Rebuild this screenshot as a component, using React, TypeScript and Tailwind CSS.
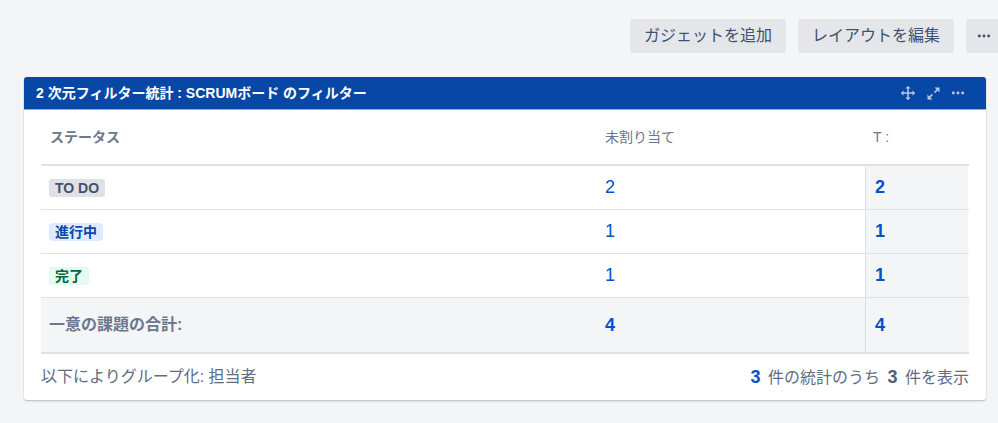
import React from "react";

const font = { fontFamily: '"Liberation Sans", "Noto Sans CJK JP", sans-serif' };

function MoveIcon() {
  return (
    <svg width="18" height="18" viewBox="0 0 24 24" fill="currentColor">
      <path d="M12 2.5l3.5 3.5h-2.5v5h5V8.5l3.5 3.5-3.5 3.5V13h-5v5h2.5L12 21.5 8.5 18H11v-5H6v2.5L2.5 12 6 8.5V11h5V6H8.5z" />
    </svg>
  );
}

function ExpandIcon() {
  return (
    <svg width="17" height="17" viewBox="0 0 24 24" fill="currentColor">
      <path d="M13.5 3.5h7v7l-2.6-2.6-3.6 3.6-1.6-1.6 3.6-3.6z" />
      <path d="M10.5 20.5h-7v-7l2.6 2.6 3.6-3.6 1.6 1.6-3.6 3.6z" />
    </svg>
  );
}

function Dots({ className }: { className?: string }) {
  return (
    <svg width="16" height="16" viewBox="0 0 24 24" fill="currentColor" className={className}>
      <circle cx="5" cy="12" r="2.2" />
      <circle cx="12" cy="12" r="2.2" />
      <circle cx="19" cy="12" r="2.2" />
    </svg>
  );
}

type Row = { label: string; lozenge: string; a: string; t: string };

const rows: Row[] = [
  { label: "TO DO", lozenge: "bg-[#dfe1e6] text-[#42526e]", a: "2", t: "2" },
  { label: "進行中", lozenge: "bg-[#deebff] text-[#0747a6]", a: "1", t: "1" },
  { label: "完了", lozenge: "bg-[#e3fcef] text-[#006644]", a: "1", t: "1" },
];

export default function App() {
  return (
    <div className="w-full h-[423px] bg-[#f4f5f7] overflow-hidden" style={font}>
      <div className="flex justify-end gap-3 pt-[19px] pr-0 mr-[-10px]">
        <button className="h-[34px] px-[14px] rounded-[3px] bg-[#e4e6ea] text-[#42526e] text-[16px] leading-none">
          ガジェットを追加
        </button>
        <button className="h-[34px] px-[14px] rounded-[3px] bg-[#e4e6ea] text-[#42526e] text-[16px] leading-none">
          レイアウトを編集
        </button>
        <button className="h-[34px] w-[42px] rounded-[3px] bg-[#e4e6ea] text-[#42526e] flex items-center pl-[10px]">
          <Dots />
        </button>
      </div>

      <div className="ml-[24px] mt-[24px] w-[962px] bg-white rounded-[3px] shadow-[0_1px_2px_rgba(9,30,66,0.28)]">
        <div className="h-[33px] bg-[#0747a6] rounded-t-[3px] border-b border-[#8fb1e3] flex items-center pl-[12px] pr-[20px]">
          <div className="text-white font-bold text-[14px] leading-none flex-1">
            2 次元フィルター統計 : SCRUMボード のフィルター
          </div>
          <div className="flex items-center gap-[8px] text-[#b8c9e6]">
            <MoveIcon />
            <ExpandIcon />
            <Dots />
          </div>
        </div>

        <div className="px-[17px]">
          <div className="grid grid-cols-[556px_268px_103px] h-[56px] items-center border-b-2 border-[#dfe1e6] text-[14px] text-[#6b778c]">
            <div className="pl-[9px] font-bold">ステータス</div>
            <div className="pl-[8px]">未割り当て</div>
            <div className="pl-[8px]">T :</div>
          </div>

          {rows.map((r) => (
            <div
              key={r.label}
              className="grid grid-cols-[556px_268px_103px] h-[44px] border-b border-[#dfe1e6]"
            >
              <div className="pl-[8px] flex items-center">
                <span
                  className={`${r.lozenge} font-bold text-[14px] leading-[18px] h-[18px] px-[6px] rounded-[3px]`}
                >
                  {r.label}
                </span>
              </div>
              <div className="pl-[8px] flex items-center text-[#0052cc] text-[18px]">{r.a}</div>
              <div className="pl-[9px] flex items-center text-[#0052cc] text-[18px] font-bold bg-[#f4f5f7] border-l border-[#d9dce1]">
                {r.t}
              </div>
            </div>
          ))}

          <div className="grid grid-cols-[556px_268px_103px] h-[56px] bg-[#f4f5f7] border-b-2 border-[#dfe1e6]">
            <div className="pl-[8px] flex items-center font-bold text-[16px] text-[#6b778c]">一意の課題の合計:</div>
            <div className="pl-[8px] flex items-center text-[#0052cc] text-[18px] font-bold">4</div>
            <div className="pl-[9px] flex items-center text-[#0052cc] text-[18px] font-bold border-l border-[#d9dce1]">4</div>
          </div>

          <div className="h-[46px] flex items-center justify-between text-[16px] text-[#5e6c84]">
            <div>以下によりグループ化: 担当者</div>
            <div>
              <span className="font-bold text-[#0052cc] text-[18px] mr-[3px]">3</span>&nbsp;件の統計のうち&nbsp;
              <span className="font-bold text-[#505f79] text-[18px] mx-[3px]">3</span>&nbsp;件を表示
            </div>
          </div>
        </div>
      </div>
    </div>
  );
}
